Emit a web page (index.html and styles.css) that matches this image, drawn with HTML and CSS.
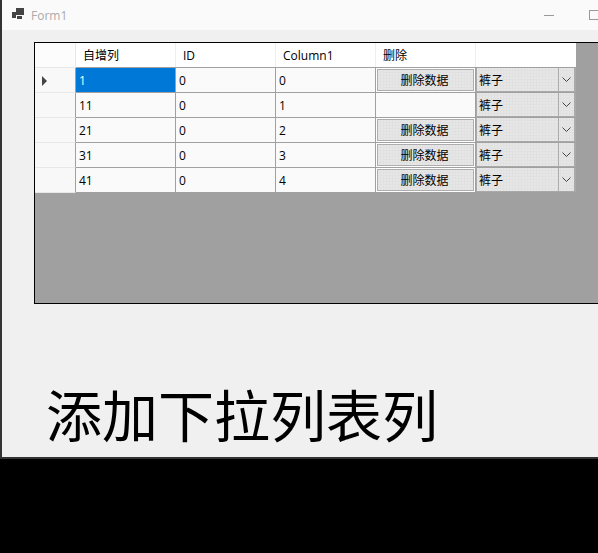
FILE: index.html
```html
<!DOCTYPE html>
<html lang="en">
<head>
    <meta charset="UTF-8">
    <title>Form1</title>
    <link rel="stylesheet" href="styles.css">
</head>
<body>
<div class="window">
    <!-- Title bar -->
    <div class="titlebar">
        <svg class="app-icon" width="12" height="11" viewBox="0 0 12 11">
            <rect x="0" y="4" width="4" height="6" fill="#444"/>
            <rect x="4" y="0" width="8" height="7" fill="#444"/>
            <rect x="5" y="8" width="5" height="3" fill="#444"/>
        </svg>
        <span class="title">Form1</span>
        <span class="min-btn"></span>
        <span class="max-btn"></span>
    </div>

    <!-- Client area -->
    <div class="client">
        <div class="grid-view">
            <div class="row head">
                <div class="row-head"></div>
                <div class="cell">自增列</div>
                <div class="cell">ID</div>
                <div class="cell">Column1</div>
                <div class="cell">删除</div>
                <div class="cell last"></div>
            </div>
            <div class="row">
                <div class="row-head"><span class="arrow"></span></div>
                <div class="cell selected">1</div>
                <div class="cell">0</div>
                <div class="cell">0</div>
                <div class="cell btn-cell"><span class="btn">删除数据</span></div>
                <div class="cell combo-cell"><span class="combo"><span class="combo-text">裤子</span><span class="combo-drop"><svg width="9" height="5" viewBox="0 0 9 5"><path d="M0.500 0.500l4 4 4-4" fill="none" stroke="#444"/></svg></span></span></div>
            </div>
            <div class="row">
                <div class="row-head"></div>
                <div class="cell">11</div>
                <div class="cell">0</div>
                <div class="cell">1</div>
                <div class="cell btn-cell"></div>
                <div class="cell combo-cell"><span class="combo"><span class="combo-text">裤子</span><span class="combo-drop"><svg width="9" height="5" viewBox="0 0 9 5"><path d="M0.500 0.500l4 4 4-4" fill="none" stroke="#444"/></svg></span></span></div>
            </div>
            <div class="row">
                <div class="row-head"></div>
                <div class="cell">21</div>
                <div class="cell">0</div>
                <div class="cell">2</div>
                <div class="cell btn-cell"><span class="btn">删除数据</span></div>
                <div class="cell combo-cell"><span class="combo"><span class="combo-text">裤子</span><span class="combo-drop"><svg width="9" height="5" viewBox="0 0 9 5"><path d="M0.500 0.500l4 4 4-4" fill="none" stroke="#444"/></svg></span></span></div>
            </div>
            <div class="row">
                <div class="row-head"></div>
                <div class="cell">31</div>
                <div class="cell">0</div>
                <div class="cell">3</div>
                <div class="cell btn-cell"><span class="btn">删除数据</span></div>
                <div class="cell combo-cell"><span class="combo"><span class="combo-text">裤子</span><span class="combo-drop"><svg width="9" height="5" viewBox="0 0 9 5"><path d="M0.500 0.500l4 4 4-4" fill="none" stroke="#444"/></svg></span></span></div>
            </div>
            <div class="row">
                <div class="row-head"></div>
                <div class="cell">41</div>
                <div class="cell">0</div>
                <div class="cell">4</div>
                <div class="cell btn-cell"><span class="btn">删除数据</span></div>
                <div class="cell combo-cell"><span class="combo"><span class="combo-text">裤子</span><span class="combo-drop"><svg width="9" height="5" viewBox="0 0 9 5"><path d="M0.500 0.500l4 4 4-4" fill="none" stroke="#444"/></svg></span></span></div>
            </div>
        </div>
        <div class="big-label">添加下拉列表列</div>
    </div>
</div>
</body>
</html>
```

FILE: styles.css
```css
* {
    margin: 0;
    padding: 0;
    box-sizing: border-box;
}

body {
    background: #000;
    height: 553px;
    overflow: hidden;
    font-family: "Open Sans", "Noto Sans CJK SC", sans-serif;
    font-size: 12px;
    color: #000;
}

.window {
    width: 598px;
    height: 459px;
    overflow: hidden;
    border-left: 2px solid #333;
    border-bottom: 2px solid #333;
    background: #f0f0f0;
}

/* Title bar */
.titlebar {
    height: 30px;
    background: #fafafa;
    display: flex;
    align-items: center;
    padding-left: 10px;
    overflow: hidden;
}

.app-icon {
    flex: none;
    margin-right: 7px;
    margin-top: -3px;
}

.title {
    flex: none;
    color: #aaa;
    font-size: 12px;
    width: 513px;
}

.min-btn {
    flex: none;
    width: 10px;
    height: 1px;
    background: #999;
    margin-right: 35px;
}

.max-btn {
    flex: none;
    width: 10px;
    height: 10px;
    border: 1px solid #999;
}

/* Grid */
.client {
    padding: 12px 0 0 32px;
}

.grid-view {
    height: 262px;
    background: #a0a0a0;
    border: 1px solid #000;
    border-right: 0;
}

.row {
    display: flex;
    height: 25px;
    border-bottom: 1px solid #a0a0a0;
}

.row-head {
    flex: none;
    width: 41px;
    background: #f8f8f8;
    border-right: 1px solid #a0a0a0;
    border-bottom: 1px solid #e8e8e8;
    margin-bottom: -1px;
    display: flex;
    align-items: center;
    padding-left: 7px;
}

.arrow {
    border-left: 5px solid #444;
    border-top: 5px solid transparent;
    border-bottom: 5px solid transparent;
    margin-top: 2px;
}

.cell {
    flex: none;
    width: 100px;
    background: #fafafa;
    border-right: 1px solid #a0a0a0;
    padding-left: 3px;
    line-height: 26px;
    white-space: nowrap;
}

.head .row-head {
    background: #fcfcfc;
    border-right-color: #e8e8e8;
}

.head .cell {
    background: #fff;
    border-right: 1px solid #eee;
    padding-left: 7px;
}

.head .cell.last {
    border-right: 0;
}

.selected {
    background: #0078d7;
    color: #fff;
}

.btn-cell {
    padding: 1px 0 0 1px;
}

.combo-cell {
    border-right: 0;
    background: #a9a9a9;
    padding: 0 2px 0 1px;
}

.btn {
    display: block;
    width: 97px;
    height: 22px;
    line-height: 21px;
    padding-right: 2px;
    text-align: center;
    border: 1px solid #adadad;
    outline: 1px solid #fff;
    background-color: #e1e1e1;
    background-image: radial-gradient(circle at 1px 1px, #e7e7e7 0.7px, transparent 0.8px);
    background-size: 3px 3px;
}

.combo {
    display: flex;
    height: 23px;
    line-height: 26px;
    background-color: #e1e1e1;
    background-image: radial-gradient(circle at 1px 1px, #e7e7e7 0.7px, transparent 0.8px);
    background-size: 3px 3px;
}

.combo-text {
    flex: 1;
    padding-left: 2px;
    border-right: 1px solid #adadad;
}

.combo-drop {
    flex: none;
    width: 15px;
    display: flex;
    align-items: center;
    justify-content: center;
}

/* Label below the grid */
.big-label {
    margin-top: 69px;
    margin-left: 12px;
    font-family: "Noto Sans CJK SC", sans-serif;
    font-size: 56px;
    line-height: 80px;
    color: #000;
}
```
